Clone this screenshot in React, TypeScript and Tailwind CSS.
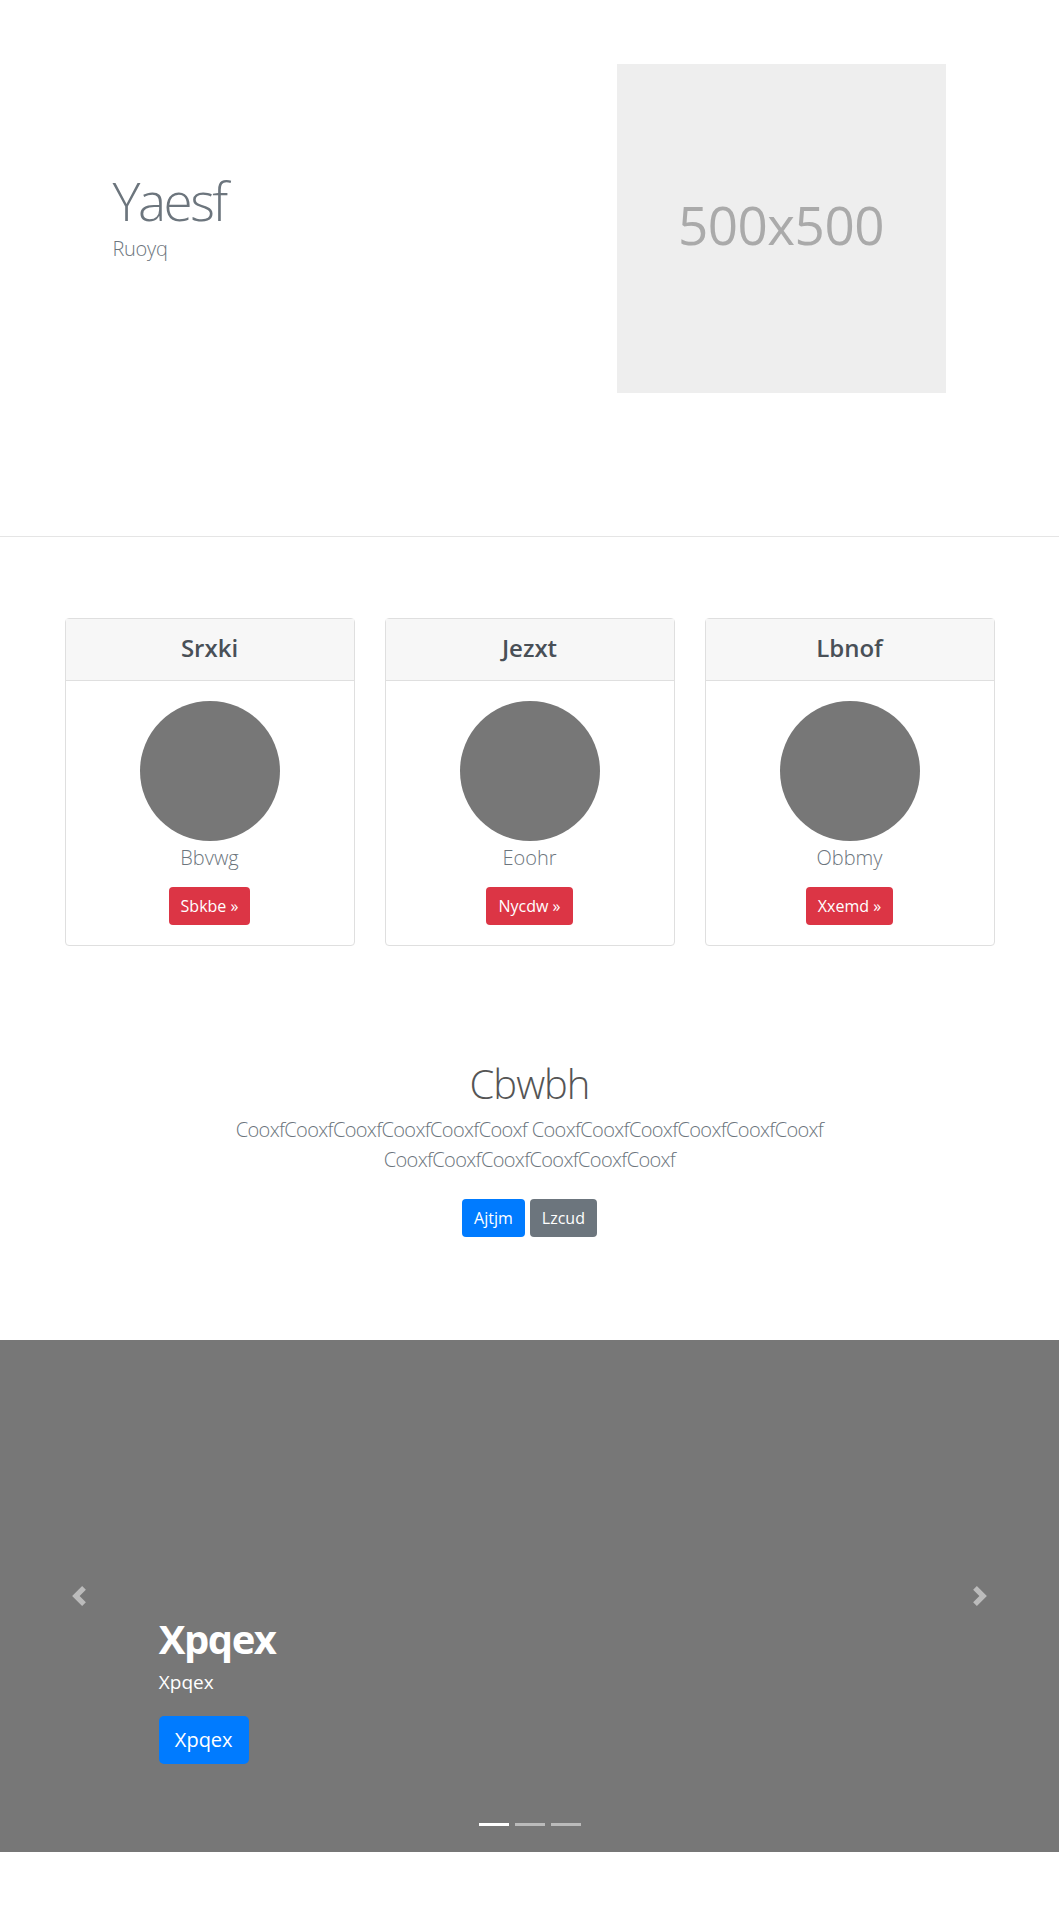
import React from "react";

const font = { fontFamily: '"Open Sans", "Noto Sans", "Liberation Sans", sans-serif' };

function Chevron({ dir }: { dir: "prev" | "next" }) {
  return (
    <svg width="20" height="20" viewBox="0 0 8 8" className="opacity-50">
      {dir === "prev" ? (
        <path fill="#fff" d="M5.25 0l-4 4 4 4 1.5-1.5-2.5-2.5 2.5-2.5-1.5-1.5z" />
      ) : (
        <path fill="#fff" d="M2.75 0l-1.5 1.5 2.5 2.5-2.5 2.5 1.5 1.5 4-4-4-4z" />
      )}
    </svg>
  );
}

function Card({ title, name, btn }: { title: string; name: string; btn: string }) {
  return (
    <div className="flex flex-col rounded border border-[#dfdfdf] bg-white">
      <div className="flex h-[62px] items-center justify-center border-b border-[#dfdfdf] bg-[#f7f7f7] pb-[4px] text-[24px] font-semibold text-[#495057]">
        {title}
      </div>
      <div className="flex flex-col items-center px-5 pt-5 pb-5">
        <div className="h-[140px] w-[140px] rounded-full bg-[#777777]" />
        <div className="mt-[2px] text-[20px] leading-[30px] font-light text-[#6c757d]">{name}</div>
        <button className="mt-[14px] h-[38px] rounded bg-[#dc3545] px-3 text-[16px] text-white">
          {btn} »
        </button>
      </div>
    </div>
  );
}

export default function App() {
  return (
    <div className="min-h-[1920px] bg-white" style={font}>
      {/* Hero */}
      <section className="border-b border-[#e5e5e5] pt-16 pb-[143px]">
        <div className="mx-auto grid w-[930px] grid-cols-2">
          <div className="flex flex-col justify-center pb-6 pl-12">
            <h1 className="text-[53px] leading-[1.2] font-light tracking-[-2.5px] text-[#6c757d]">Yaesf</h1>
            <p className="mt-[2px] text-[20px] leading-[30px] font-light tracking-[-0.3px] text-[#6c757d]">Ruoyq</p>
          </div>
          <div className="pl-[87px]">
            <div className="flex h-[329px] w-[329px] items-center justify-center bg-[#eeeeee] pb-[8px] text-[53px] tracking-[-0.5px] text-[#aaaaaa]">
              500x500
            </div>
          </div>
        </div>
      </section>

      {/* Cards */}
      <section className="pt-[81px]">
        <div className="mx-auto grid w-[930px] grid-cols-3 gap-[30px]">
          <Card title="Srxki" name="Bbvwg" btn="Sbkbe" />
          <Card title="Jezxt" name="Eoohr" btn="Nycdw" />
          <Card title="Lbnof" name="Obbmy" btn="Xxemd" />
        </div>
      </section>

      {/* CTA */}
      <section className="flex flex-col items-center pt-[114px] pb-[103px] text-center">
        <h2 className="text-[40px] leading-[48px] font-light tracking-[-1px] text-[#555555]">Cbwbh</h2>
        <p className="mt-[7px] w-[640px] text-[20px] leading-[30px] font-light tracking-[-0.65px] text-[#6c757d]">
          CooxfCooxfCooxfCooxfCooxfCooxf CooxfCooxfCooxfCooxfCooxfCooxf CooxfCooxfCooxfCooxfCooxfCooxf
        </p>
        <div className="mt-6 flex gap-[5px]">
          <button className="h-[38px] rounded bg-[#007bff] px-3 text-[16px] text-white">Ajtjm</button>
          <button className="h-[38px] rounded bg-[#6c757d] px-3 text-[16px] text-white">Lzcud</button>
        </div>
      </section>

      {/* Carousel */}
      <section className="relative h-[512px] bg-[#777777]">
        <div className="absolute top-0 bottom-0 left-0 flex w-[15%] items-center justify-center">
          <Chevron dir="prev" />
        </div>
        <div className="absolute top-0 right-0 bottom-0 flex w-[15%] items-center justify-center">
          <Chevron dir="next" />
        </div>
        <div className="absolute top-[275px] left-[15%] text-white">
          <h1 className="text-[40px] leading-[48px] font-bold tracking-[-1.5px]">Xpqex</h1>
          <p className="mt-[6px] text-[19px] leading-[27px] font-medium">Xpqex</p>
          <button className="mt-[20px] h-[48px] rounded-[5px] bg-[#007bff] px-4 text-[20px] text-white">
            Xpqex
          </button>
        </div>
        <div className="absolute bottom-[26px] left-0 right-0 flex justify-center gap-[6px]">
          <span className="h-[3px] w-[30px] bg-white" />
          <span className="h-[3px] w-[30px] bg-white opacity-50" />
          <span className="h-[3px] w-[30px] bg-white opacity-50" />
        </div>
      </section>
    </div>
  );
}
